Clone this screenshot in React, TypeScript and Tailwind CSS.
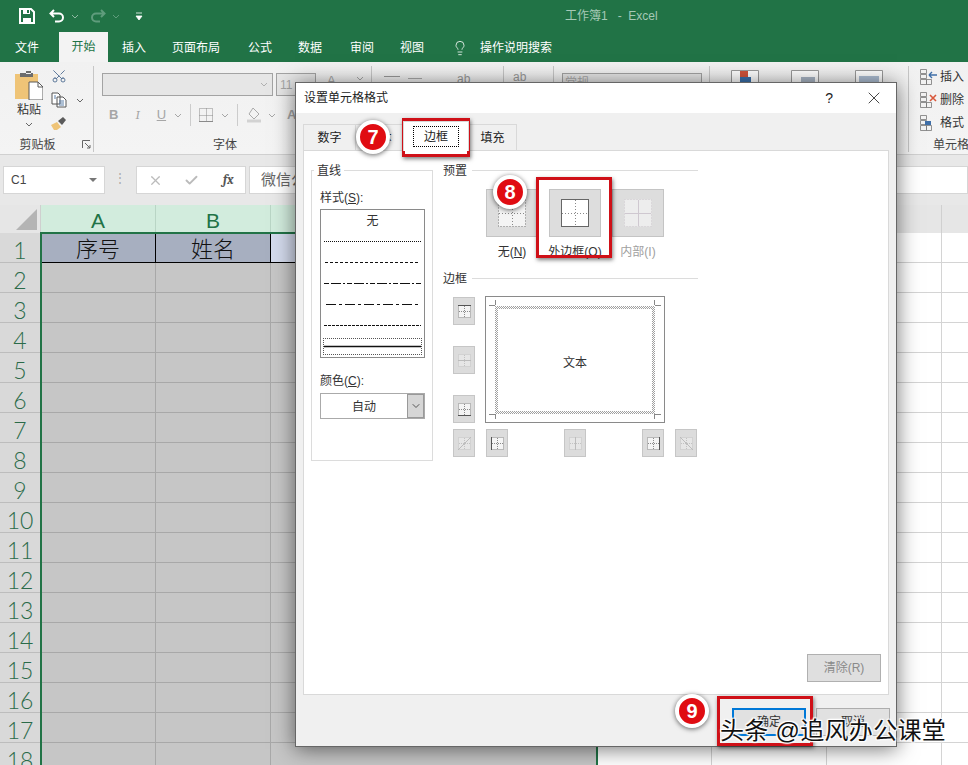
import React from "react";
import { Scissors, ChevronDown, Lightbulb, X, Check } from "lucide-react";

const rows = Array.from({ length: 18 }, (_, i) => i + 1);
const widths = ["w-[115px]", "w-[115px]", "w-[326px]", "w-[115px]", "w-[115px]", "w-[115px]", "w-[115px]"];

function Mini({ className = "" }: { className?: string }) {
  return (
    <svg width="8" height="5" viewBox="0 0 8 5" className={className}>
      <path d="M1 1l3 3 3-3" fill="none" stroke="currentColor" strokeWidth="1" />
    </svg>
  );
}

function QuickBar() {
  return (
    <div className="flex h-[32px] items-center bg-[#217346] text-white">
      <svg width="16" height="16" viewBox="0 0 16 16" className="ml-[19px]">
        <path d="M1 1h11l3 3v11H1z" fill="none" stroke="#fff" strokeWidth="2" />
        <path d="M4 1h7v5H4zM4 10h8v5H4z" fill="#fff" />
        <path d="M8 2h2v3H8z" fill="#217346" />
      </svg>
      <svg width="16" height="14" viewBox="0 0 16 14" className="ml-[14px]">
        <path d="M5 1L1.500 4.500 5 8M2 4.500h8a4 4 0 0 1 0 8H6" fill="none" stroke="#fff" strokeWidth="2" />
      </svg>
      <Mini className="ml-[6px] text-[#8fb9a2]" />
      <svg width="16" height="14" viewBox="0 0 16 14" className="ml-[11px]">
        <path d="M11 1l3.500 3.500L11 8M14 4.500H6a4 4 0 0 0 0 8h4" fill="none" stroke="#5f9c7c" strokeWidth="2" />
      </svg>
      <Mini className="ml-[6px] text-[#5f9c7c]" />
      <svg width="8" height="9" viewBox="0 0 8 9" className="ml-[15px]">
        <path d="M1 1h6M1 4h6l-3 4z" fill="#fff" stroke="#fff" strokeWidth="0.8" />
      </svg>
      <span className="ml-[422px] text-[12px] text-[#a6c9b6] whitespace-pre">工作簿1   -  Excel</span>
    </div>
  );
}

function TabBar() {
  return (
    <div className="flex h-[30px] items-end bg-[#217346] text-[12px] text-white">
      <span className="ml-[15px] leading-[28px]">文件</span>
      <span className="ml-[20px] w-[49px] bg-[#f3f3f3] text-center leading-[30px] text-[#217346]">开始</span>
      <span className="ml-[14px] leading-[28px]">插入</span>
      <span className="ml-[26px] leading-[28px]">页面布局</span>
      <span className="ml-[28px] leading-[28px]">公式</span>
      <span className="ml-[26px] leading-[28px]">数据</span>
      <span className="ml-[28px] leading-[28px]">审阅</span>
      <span className="ml-[26px] leading-[28px]">视图</span>
      <Lightbulb size={16} strokeWidth={1.2} className="ml-[28px] mb-[6px]" />
      <span className="ml-[12px] leading-[28px]">操作说明搜索</span>
    </div>
  );
}

function Sep() {
  return <div className="mt-[4px] h-[86px] w-px shrink-0 bg-[#c6c6c6]" />;
}

function Clipboard() {
  return (
    <div className="relative flex h-full w-[93px] shrink-0 flex-col">
      <div className="flex h-[78px]">
        <div className="ml-[15px] flex w-[28px] flex-col items-center pt-[8px]">
          <svg width="28" height="30" viewBox="0 0 28 30">
            <path d="M0 4h23v25H0z" fill="#efc477" />
            <path d="M7 4h9V1h-5v3zM5 3h13v4H5z" fill="#6d6d6d" />
            <path d="M14 12h9l5 5v13H14z" fill="#fff" stroke="#5b5b5b" />
            <path d="M23 12v5h5" fill="none" stroke="#5b5b5b" />
          </svg>
          <span className="mt-[2px] text-[12px] leading-[16px] text-[#333]">粘贴</span>
          <Mini className="mt-[4px] text-[#666]" />
        </div>
        <div className="ml-[8px] flex flex-col pt-[6px]">
          <Scissors size={16} strokeWidth={1.3} className="-rotate-90 text-[#49688f]" />
          <div className="mt-[8px] flex items-center">
            <svg width="16" height="16" viewBox="0 0 16 16">
              <path d="M1 1h6l2 2v9H1zM6 5h6l3 3v7H6z" fill="#fff" stroke="#555" />
              <path d="M8 9h5M8 11h5M8 13h5M3 4h2M3 6h2" stroke="#5b7ea8" />
            </svg>
            <Mini className="ml-[9px] text-[#666]" />
          </div>
          <svg width="16" height="15" viewBox="0 0 16 15" className="mt-[8px]">
            <path d="M0 9l6-3 4 5-4 3H3z" fill="#efc477" />
            <path d="M7 5l5-4 3 3-4 5z" fill="#5b5b5b" />
          </svg>
        </div>
      </div>
      <div className="relative flex flex-1 justify-center pr-[18px] text-[12px] leading-[14px] text-[#444]">
        <span className="mt-[-2px]">剪贴板</span>
        <svg width="9" height="9" viewBox="0 0 9 9" className="absolute left-[82px] top-[0px]">
          <path d="M.5 8V.5H8M3 3l5 5M8 5v3H5" fill="none" stroke="#666" />
        </svg>
      </div>
    </div>
  );
}

function FontGroup() {
  return (
    <div className="relative flex h-full w-[277px] shrink-0 flex-col text-[#a6a6a6]">
      <div className="ml-[8px] mt-[11px] flex">
        <div className="flex h-[23px] w-[171px] items-center justify-end border border-[#a3a3a3] bg-[#e6e6e6] pr-[4px]">
          <Mini className="text-[#b0b0b0]" />
        </div>
        <div className="ml-[3px] flex h-[23px] w-[40px] items-center border border-[#a3a3a3] bg-[#e6e6e6] pl-[3px] text-[12px]">11</div>
        <span className="ml-[11px] mt-[1px] text-[13px] leading-[14px]">A</span>
        <span className="ml-[20px] mt-[3px]"><Mini /></span>
      </div>
      <div className="ml-[15px] mt-[6px] flex h-[26px] items-center text-[13px]">
        <b>B</b>
        <i className="ml-[17px] font-serif">I</i>
        <u className="ml-[17px]">U</u>
        <Mini className="ml-[8px]" />
        <div className="ml-[8px] h-[22px] w-px bg-[#ccc]" />
        <svg width="14" height="14" viewBox="0 0 14 14" className="ml-[8px]">
          <path d="M.5.5h13v13H.5zM7.500 .5v13M.5 7.500h13" fill="none" stroke="#8a8a8a" strokeDasharray="1 1" />
          <path d="M0 13.500h14" stroke="#8a8a8a" />
        </svg>
        <Mini className="ml-[8px]" />
        <div className="ml-[8px] h-[22px] w-px bg-[#ccc]" />
        <svg width="16" height="16" viewBox="0 0 16 16" className="ml-[8px]">
          <path d="M7 1l6 6-5 5-5-5z" fill="none" stroke="#aaa" />
          <path d="M1 14h14" stroke="#d2d2d2" strokeWidth="3" />
        </svg>
        <Mini className="ml-[6px]" />
        <span className="ml-[11px] font-semibold">A</span>
      </div>
      <div className="mt-[10px] flex justify-center pr-[15px] text-[12px] leading-[14px] text-[#444]">
        <span>字体</span>
      </div>
    </div>
  );
}

function CellRow({ label, kind }: { label: string; kind: number }) {
  return (
    <div className="flex h-[23px] items-center">
      <svg width="17" height="16" viewBox="0 0 17 16">
        <path d="M.5.5h6v4h-6zM.5 5.500h6v4h-6zM.5 10.500h6v5h-6zM6.500 10.500h5v5h-5z" fill="none" stroke="#777" strokeWidth="0.8" />
        {kind === 0 && <path d="M9 6h8M9 6l3-3M9 6l3 3" fill="none" stroke="#3f6fa8" strokeWidth="1.4" />}
        {kind === 1 && <path d="M10 3l6 6M16 3l-6 6" stroke="#d9583c" strokeWidth="1.6" />}
        {kind === 2 && <path d="M5 6h6v4H5z" fill="#3f6fa8" />}
      </svg>
      <span className="ml-[3px] text-[12px] text-[#333]">{label}</span>
    </div>
  );
}

function Ribbon() {
  return (
    <div className="flex h-[93px] border-b border-[#d0d0d0] bg-gradient-to-b from-[#f1f1f1] to-[#f4f4f4]">
      <Clipboard />
      <Sep />
      <FontGroup />
      <Sep />
      <div className="ml-[12px] mt-[11px] flex w-[119px] shrink-0 gap-[8px]">
        <div className="mt-[3px] h-[9px] w-[16px] border-y border-[#999]" />
        <div className="mt-[5px] h-[7px] w-[14px] border-y border-[#aaa]" />
        <span className="ml-[27px] text-[12px] leading-[12px] text-[#999]">ab</span>
      </div>
      <Sep />
      <div className="ml-[9px] mt-[8px] w-[40px] shrink-0 text-[12px] leading-[14px] text-[#999]">ab</div>
      <Sep />
      <div className="ml-[8px] mt-[11px] h-[23px] w-[140px] shrink-0 border border-[#a3a3a3] bg-[#e6e6e6] pl-[2px] text-[12px] text-[#aaa]">常规</div>
      <div className="ml-[7px]"><Sep /></div>
      <div className="ml-[21px] mt-[8px] flex shrink-0 gap-[32px]">
        <svg width="28" height="26" viewBox="0 0 28 26"><path d="M.5.500h27v25H.500z" fill="#fff" stroke="#999" /><path d="M9 1h8v6H9z" fill="#d0533a" /><path d="M9 7h11v7H9z" fill="#3a70ab" /></svg>
        <svg width="28" height="26" viewBox="0 0 28 26"><path d="M.5.500h27v25H.500z" fill="#fff" stroke="#999" /><path d="M10 7h14v18H10z" fill="#aab6c6" /></svg>
        <svg width="30" height="26" viewBox="0 0 30 26" className="ml-[4px]"><path d="M.5.500h27v25H.500z" fill="#fff" stroke="#999" /><path d="M4 6h20v20H4z" fill="#aebfd4" /></svg>
      </div>
      <div className="ml-[23px]"><Sep /></div>
      <div className="ml-[11px] mt-[3px] flex shrink-0 flex-col whitespace-nowrap">
        <CellRow label="插入" kind={0} />
        <CellRow label="删除" kind={1} />
        <CellRow label="格式" kind={2} />
        <span className="ml-[13px] mt-[4px] text-[12px] leading-[14px] text-[#444]">单元格</span>
      </div>
    </div>
  );
}

function FormulaBar() {
  return (
    <div className="flex h-[50px] bg-[#e8e8e8] pl-[3px] pt-[11px]">
      <div className="flex h-[28px] w-[102px] items-center justify-between border border-[#d6d6d6] bg-white px-[7px] text-[12px] text-[#444]">
        C1
        <svg width="8" height="4" viewBox="0 0 8 4"><path d="M0 0h8L4 4z" fill="#777" /></svg>
      </div>
      <span className="ml-[9px] mt-[4px] text-[12px] leading-[16px] text-[#aaa]">⋮</span>
      <div className="ml-[10px] flex h-[28px] w-[110px] shrink-0 items-center border border-[#d6d6d6] bg-white pl-[11px] text-[#bbb]">
        <X size={15} strokeWidth={2} />
        <Check size={15} strokeWidth={3} className="ml-[21px]" />
        <i className="ml-[24px] font-serif text-[13px] font-semibold text-[#555]">fx</i>
      </div>
      <div className="ml-[3px] flex h-[28px] flex-1 items-center border border-[#d6d6d6] bg-white pl-[11px] text-[15px] text-[#666]">微信公众号</div>
    </div>
  );
}

function Sheet() {
  return (
    <div className="relative min-h-0 flex-1 overflow-hidden">
      <div className="flex h-[28px] bg-[#e6e6e6] text-[#217346]">
        <div className="flex h-full w-[41px] shrink-0 items-end justify-end border-r border-[#cfcfcf] pb-[3px] pr-[3px]">
          <svg width="21" height="21" viewBox="0 0 21 21"><path d="M21 0v21H0z" fill="#b4b4b4" /></svg>
        </div>
        {widths.map((w, i) => (
          <div
            key={i}
            className={`${w} flex h-full shrink-0 items-center justify-center border-r pt-[3px] text-[21px] font-light leading-none ${i < 3 ? "border-[#b9d5c5] bg-[#d2ecdd]" : "border-[#d0d0d0]"}`}
          >
            {i === 0 ? "A" : i === 1 ? "B" : ""}
          </div>
        ))}
      </div>
      {rows.map((r) => (
        <div key={r} className="flex h-[30px]">
          <div className="flex w-[41px] shrink-0 items-center justify-center border-b border-r border-[#bdbdbd] bg-[#d9d9d9] pt-[5px] font-['Lato',sans-serif] text-[23px] font-light leading-[24px] text-[#2b6b49]">
            {r}
          </div>
          {widths.map((w, i) => {
            let cls = "border-[#a8a8a8] bg-[#c6c6c6]";
            let txt = "";
            if (i >= 3) cls = "border-[#d4d4d4] bg-white";
            if (r === 1 && i < 2) {
              cls = "border-black bg-[#a7afc0]";
              txt = i === 0 ? "序号" : "姓名";
            }
            if (r === 1 && i === 2) cls = "border-black bg-[#d3daec]";
            return (
              <div key={i} className={`${w} flex shrink-0 items-center justify-center overflow-visible border-b border-r text-[22px] font-light leading-[26px] text-[#111] ${cls}`}>
                <span className="translate-y-[2px]">{txt}</span>
              </div>
            );
          })}
        </div>
      ))}
      <div className="pointer-events-none absolute left-[40px] top-[27px] h-[600px] w-[558px] border-2 border-[#217346]" />
    </div>
  );
}

function PresetIcon({ kind }: { kind: "none" | "outer" | "inner" }) {
  const dot = kind === "inner" ? "#cfc8cf" : "#777";
  return (
    <svg width="30" height="30" viewBox="0 0 30 30">
      <rect x="1.500" y="1.500" width="27" height="27" fill={kind === "none" ? "#f4f4f4" : kind === "outer" ? "#fff" : "#ededed"} stroke={kind === "outer" ? "#666" : dot} strokeDasharray={kind === "outer" ? undefined : "1 2"} />
      <path d="M15.500 2v26M2 15.500h26" fill="none" stroke={kind === "inner" ? "#cfc8d0" : "#888"} strokeDasharray={kind === "inner" ? undefined : "1 2"} />
    </svg>
  );
}

function Preset({ kind, label, disabled }: { kind: "none" | "outer" | "inner"; label: React.ReactNode; disabled?: boolean }) {
  return (
    <div className="flex w-[52px] flex-col items-center">
      <div className="flex h-[48px] w-[52px] items-center justify-center border border-[#c4c4c4] bg-[#dddddd]">
        <PresetIcon kind={kind} />
      </div>
      <span className={`mt-[7px] h-[15px] whitespace-nowrap text-[12px] leading-[16px] ${disabled ? "text-[#a0a0a0]" : "text-[#333]"}`}>{label}</span>
    </div>
  );
}

type V = "top" | "midH" | "bottom" | "diagU" | "left" | "midV" | "right" | "diagD";
function SmallBtn({ v, className = "" }: { v: V; className?: string }) {
  const off = v === "midH" || v === "midV" || v === "diagU" || v === "diagD";
  const lines: Record<V, string> = {
    top: "M1 1.500h13",
    midH: "M1 7.500h13",
    bottom: "M1 13.500h13",
    diagU: "M1 14L14 1",
    left: "M1.500 1v13",
    midV: "M7.500 1v13",
    right: "M13.500 1v13",
    diagD: "M1 1l13 13",
  };
  return (
    <div className={`flex h-[28px] w-[22px] shrink-0 items-center justify-center border border-[#c6c6c6] bg-[#dcdcdc] ${className}`}>
      <svg width="15" height="15" viewBox="0 0 15 15">
        <rect x="1.500" y="1.500" width="12" height="12" fill={off ? "#e6e6e6" : "#f4f4f4"} stroke={off ? "#c2c2c2" : "#8a8a8a"} strokeDasharray="1 1" />
        <path d="M7.500 2v11M2 7.500h11" stroke={off ? "#c2c2c2" : "#8a8a8a"} strokeDasharray="1 1" />
        <path d={lines[v]} stroke={off ? "#bcbcbc" : "#555"} fill="none" />
      </svg>
    </div>
  );
}

function StyleLine({ dash, w = 1, x = 3 }: { dash?: string; w?: number; x?: number }) {
  return (
    <div className="flex h-[21px] items-center">
      <svg width="103" height="3" viewBox="0 0 103 3">
        <path d={`M${x} 1.500H${103 - x}`} stroke="#111" strokeWidth={w} strokeDasharray={dash} />
      </svg>
    </div>
  );
}

function Heading({ children }: { children: React.ReactNode }) {
  return (
    <div className="flex h-[14px] items-center text-[12px] text-[#333]">
      <span className="pt-[2px]">{children}</span>
      <div className="ml-[5px] h-px flex-1 bg-[#dcdcdc]" />
    </div>
  );
}

function Dialog() {
  return (
    <div className="absolute left-[295px] top-[82px] flex h-[665px] w-[602px] flex-col border border-[#666] bg-[#f0f0f0] shadow-[0_2px_20px_rgba(0,0,0,0.55)]">
      <div className="flex h-[30px] shrink-0 items-center bg-white pl-[8px] text-[12px] text-[#222]">
        设置单元格格式
        <span className="ml-auto text-[14px]">?</span>
        <X size={20} strokeWidth={1} className="ml-[31px] mr-[12px]" />
      </div>
      <div className="flex h-[37px] shrink-0 items-end pl-[7px] text-[12px] text-[#222]">
        <div className="flex h-[26px] w-[52px] items-center justify-center border-l border-t border-[#d9d9d9]">数字</div>
        <div className="flex h-[26px] w-[48px] items-center justify-center border-l border-t border-[#d9d9d9]">字体</div>
        <div className="relative z-10 mb-[-1px] flex h-[30px] w-[66px] items-center justify-center border-x border-t border-[#d9d9d9] bg-white">
          <span className="flex h-[21px] w-[46px] items-center justify-center border border-dotted border-black">边框</span>
        </div>
        <div className="flex h-[26px] w-[48px] items-center justify-center border-r border-t border-[#d9d9d9]">填充</div>
      </div>
      <div className="ml-[7px] flex h-[545px] w-[586px] shrink-0 flex-col border border-[#d9d9d9] bg-white pl-[7px] pt-[12px] text-[12px] text-[#333]">
        <div className="flex items-start">
          <div className="relative mt-[7px] h-[291px] w-[122px] shrink-0 border border-[#dcdcdc] pl-[8px] pt-[20px]">
            <span className="absolute left-[2px] top-[-7px] bg-white px-[3px] leading-[14px]">直线</span>
            <div className="h-[14px] leading-[14px]">样式(<u>S</u>):</div>
            <div className="mt-[4px] h-[149px] w-[105px] border border-[#8a8a8a] bg-white">
              <div className="flex h-[21px] items-center justify-center">无</div>
              <StyleLine dash="1 1" />
              <StyleLine dash="3 2" x={4} />
              <StyleLine dash="5 2 10 2 2 2" />
              <StyleLine dash="10 3 3 3" x={5} />
              <StyleLine dash="3 1" />
              <div className="relative flex h-[20px] items-center">
                <StyleLine w={1.6} />
                <div className="absolute left-[2px] right-[2px] top-[2px] h-[17px] border border-dotted border-[#555]" />
              </div>
            </div>
            <div className="mt-[16px] h-[14px] leading-[14px]">颜色(<u>C</u>):</div>
            <div className="mt-[5px] flex h-[26px] w-[105px] items-center border border-[#aaa]">
              <span className="flex-1 pt-[2px] text-center">自动</span>
              <span className="flex h-full w-[17px] items-center justify-center border border-[#999] bg-[#d6d6d6] text-[#555]">
                <ChevronDown size={12} />
              </span>
            </div>
          </div>
          <div className="ml-[10px] w-[255px] shrink-0">
            <Heading>预置</Heading>
            <div className="ml-[43px] mt-[12px] flex gap-[11px]">
              <Preset kind="none" label={<>无(<u>N</u>)</>} />
              <Preset kind="outer" label={<>外边框(<u>O</u>)</>} />
              <Preset kind="inner" disabled label="内部(I)" />
            </div>
            <div className="mt-[12px]"><Heading>边框</Heading></div>
            <div className="ml-[10px] mt-[11px] flex">
              <div className="flex flex-col gap-[21px] pt-px">
                <SmallBtn v="top" />
                <SmallBtn v="midH" />
                <SmallBtn v="bottom" />
              </div>
              <div className="relative ml-[10px] flex h-[127px] w-[180px] items-center justify-center border border-[#8a8a8a] bg-white pt-[6px]">
                文本
                <svg width="178" height="125" viewBox="0 0 178 125" className="absolute left-0 top-0">
                  <defs>
                    <pattern id="hatch" width="2" height="2" patternUnits="userSpaceOnUse">
                      <rect width="1" height="1" fill="#a0a0a0" />
                      <rect x="1" y="1" width="1" height="1" fill="#a0a0a0" />
                    </pattern>
                  </defs>
                  <rect x="10.500" y="10.500" width="157" height="105" fill="none" stroke="url(#hatch)" strokeWidth="3" />
                  <path d="M9.500 3v5M3 8.500h6M168.500 3v5M169 8.500h6M9.500 122v-5M3 117.500h6M168.500 122v-5M169 117.500h6" stroke="#888" fill="none" />
                </svg>
              </div>
            </div>
            <div className="ml-[10px] mt-[6px] flex">
              <SmallBtn v="diagU" />
              <SmallBtn v="left" className="ml-[11px]" />
              <SmallBtn v="midV" className="ml-[56px]" />
              <SmallBtn v="right" className="ml-[56px]" />
              <SmallBtn v="diagD" className="ml-[11px]" />
            </div>
          </div>
        </div>
        <div className="mb-[12px] mr-[7px] mt-auto flex h-[28px] w-[74px] items-center justify-center self-end border border-[#b0b0b0] bg-[#dfdfdf] text-[#8a8a8a]">清除(R)</div>
      </div>
      <div className="flex justify-end gap-[10px] pr-[6px] pt-[13px] text-[12px] text-[#333]">
        <div className="flex h-[28px] w-[74px] items-center justify-center border-2 border-[#0078d7] bg-[#e1e1e1]">确定</div>
        <div className="flex h-[28px] w-[74px] items-center justify-center border border-[#adadad] bg-[#e1e1e1]">取消</div>
      </div>
    </div>
  );
}

function Marker({ n, className }: { n: number; className: string }) {
  return (
    <div className={`absolute flex h-[34px] w-[34px] items-center justify-center rounded-full border-[4px] border-white bg-[#e00c12] text-[20px] font-bold text-white shadow-[0_1px_5px_rgba(0,0,0,0.6)] ${className}`}>
      {n}
    </div>
  );
}

function Annot({ className }: { className: string }) {
  return <div className={`pointer-events-none absolute border-[3px] border-[#cf1018] shadow-[1px_2px_4px_rgba(0,0,0,0.5)] ${className}`} />;
}

export default function App() {
  return (
    <div className="relative flex h-[765px] w-[968px] flex-col overflow-hidden bg-white font-['Liberation_Sans','Noto_Sans_CJK_SC',sans-serif]">
      <QuickBar />
      <TabBar />
      <Ribbon />
      <FormulaBar />
      <Sheet />
      <Dialog />
      <Annot className="left-[402px] top-[118px] h-[39px] w-[68px]" />
      <Annot className="left-[536px] top-[177px] h-[81px] w-[76px]" />
      <Annot className="left-[717px] top-[696px] h-[50px] w-[96px]" />
      <Marker n={7} className="left-[356px] top-[120px]" />
      <Marker n={8} className="left-[493px] top-[175px]" />
      <Marker n={9} className="left-[675px] top-[694px]" />
      <div className="absolute left-[720px] top-[715px] whitespace-pre text-[24px] leading-[32px] tracking-[0.3px] text-[#111] [text-shadow:0_0_2px_#fff,0_0_3px_#fff,1px_1px_1px_#fff,-1px_-1px_1px_#fff,1px_-1px_1px_#fff,-1px_1px_1px_#fff]">
        头条 @追风办公课堂
      </div>
    </div>
  );
}
